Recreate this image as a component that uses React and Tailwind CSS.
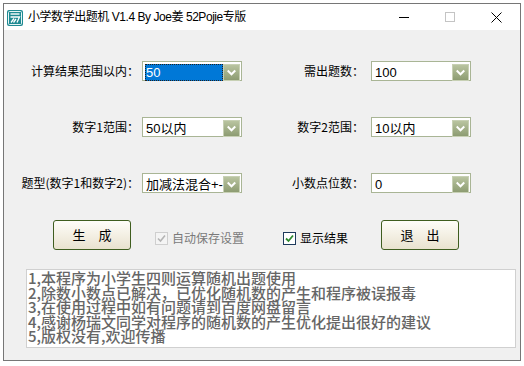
import React from "react";

function Chevron() {
  return (
    <svg width="17" height="17" viewBox="0 0 17 17">
      <path d="M5 7 L8.5 10.5 L12 7" fill="none" stroke="#ffffff" strokeWidth="2.2" strokeLinecap="square" />
    </svg>
  );
}

function Combo({ value, selected }) {
  return (
    <div className="w-[100px] h-[20px] border border-[#a9b595] bg-white flex items-start p-px box-border">
      <div
        className={
          "flex-1 h-[17px] mt-px ml-px overflow-hidden whitespace-nowrap flex items-center pl-px text-[13px] leading-none font-['Liberation_Sans','Noto_Sans_CJK_SC',sans-serif] " +
          (selected
            ? "bg-[#0078d7] text-white outline-1 outline-dotted outline-[#222] -outline-offset-1"
            : "text-black")
        }
      >
        {value}
      </div>
      <div className="w-[17px] h-[17px] mt-px border border-[#c7d0b4] bg-linear-to-b from-[#b9c4a0] to-[#8d9c72] flex items-center justify-center box-border">
        <Chevron />
      </div>
    </div>
  );
}

function Label({ children, w }) {
  return (
    <div className={"text-right text-[12px] text-black whitespace-nowrap font-['Noto_Sans_CJK_SC',sans-serif] " + w}>
      {children}
    </div>
  );
}

function Row({ l1, v1, l2, v2, sel }) {
  return (
    <div className="flex items-center h-[20px]">
      <Label w="w-[135px]">{l1}</Label>
      <div className="ml-[3px]">
        <Combo value={v1} selected={sel} />
      </div>
      <Label w="w-[122px]">{l2}</Label>
      <div className="ml-[7px]">
        <Combo value={v2} />
      </div>
    </div>
  );
}

export default function App() {
  const lines = [
    "1,本程序为小学生四则运算随机出题使用",
    "2,除数小数点已解决，已优化随机数的产生和程序被误报毒",
    "3,在使用过程中如有问题请到百度网盘留言",
    "4,感谢杨瑞文同学对程序的随机数的产生优化提出很好的建议",
    "5,版权没有,欢迎传播",
  ];
  return (
    <div className="w-[524px] h-[366px] bg-white overflow-hidden">
      <div className="ml-[3px] mt-[3px] w-[518px] h-[358px] border border-[#767676] flex flex-col box-border">
        {/* Title bar */}
        <div className="h-[26px] bg-white flex items-center relative">
          <svg width="16" height="16" viewBox="0 0 16 16" className="ml-[3px] mt-[1px]">
            <rect x="0" y="0" width="16" height="16" rx="2" fill="#1f8a92" />
            <rect x="1.5" y="1.5" width="13" height="13" rx="1" fill="none" stroke="#e6f4f4" strokeWidth="1" />
            <path d="M3.5 4 H12.5" stroke="#fff" strokeWidth="1.4" />
            <path d="M3.5 7 H12.5 L10 12.5" fill="none" stroke="#fff" strokeWidth="1.3" />
            <path d="M4 12.5 L7 8.5 M6.5 12.5 L9 9" stroke="#fff" strokeWidth="1.3" />
          </svg>
          <span className="ml-[5px] text-[12px] tracking-[-0.45px] text-black font-['Liberation_Sans','Noto_Sans_CJK_SC',sans-serif] whitespace-nowrap">
            小学数学出题机 V1.4 By Joe姜 52Pojie专版
          </span>
          <div className="ml-auto flex items-center h-full">
            <div className="w-[46px] h-full flex items-center justify-center">
              <div className="w-[10px] h-px bg-black" />
            </div>
            <div className="w-[46px] h-full flex items-center justify-center">
              <div className="w-[10px] h-[10px] border border-[#c4c4c4]" />
            </div>
            <div className="w-[46px] h-full flex items-center justify-center mr-[1px]">
              <svg width="11" height="11" viewBox="0 0 11 11">
                <path d="M0.5 0.5 L10.5 10.5 M10.5 0.5 L0.5 10.5" stroke="#000" strokeWidth="1" />
              </svg>
            </div>
          </div>
        </div>

        {/* Content */}
        <div className="flex-1 bg-[#f0f0f0] flex flex-col pt-[31px]">
          <Row l1="计算结果范围以内：" v1="50" l2="需出题数：" v2="100" sel />
          <div className="mt-[36px]">
            <Row l1="数字1范围：" v1="50以内" l2="数字2范围：" v2="10以内" />
          </div>
          <div className="mt-[36px]">
            <Row l1="题型(数字1和数字2)：" v1="加减法混合+-" l2="小数点位数：" v2="0" />
          </div>

          {/* Buttons row */}
          <div className="mt-[27px] h-[30px] flex items-center">
            <div className="ml-[49px]">
              <button className="w-[78px] h-[30px] border border-[#3f5d1f] rounded-[3px] bg-linear-to-b from-[#fefdf9] to-[#e9e2cf] text-[13px] text-black font-['Noto_Sans_CJK_SC',sans-serif] flex items-center justify-center">
                生　成
              </button>
            </div>
            <div className="ml-[24px] w-[128px] flex items-center mt-[6px]">
              <div className="w-[13px] h-[13px] border border-[#cfcfcf] bg-[#f4f4f4] flex items-center justify-center">
                <svg width="9" height="9" viewBox="0 0 9 9">
                  <path d="M1 4.5 L3.5 7 L8 1.5" fill="none" stroke="#b4b4b4" strokeWidth="1.6" />
                </svg>
              </div>
              <span className="ml-[4px] text-[12px] text-[#7a7a7a] font-['Noto_Sans_CJK_SC',sans-serif] whitespace-nowrap">
                自动保存设置
              </span>
            </div>
            <div className="w-[98px] flex items-center mt-[6px]">
              <div className="w-[13px] h-[13px] border border-[#1e3a5c] bg-white flex items-center justify-center">
                <svg width="9" height="9" viewBox="0 0 9 9">
                  <path d="M1 4.5 L3.5 7 L8 1.5" fill="none" stroke="#2f8a2f" strokeWidth="1.8" />
                </svg>
              </div>
              <span className="ml-[4px] text-[12px] text-black font-['Noto_Sans_CJK_SC',sans-serif] whitespace-nowrap">
                显示结果
              </span>
            </div>
            <button className="w-[78px] h-[30px] border border-[#3f5d1f] rounded-[3px] bg-linear-to-b from-[#fefdf9] to-[#e9e2cf] text-[13px] text-black font-['Noto_Sans_CJK_SC',sans-serif] flex items-center justify-center">
              退　出
            </button>
          </div>

          {/* Text area */}
          <div className="mt-[19px] ml-[22px] w-[490px] h-[79px] bg-white border border-[#d0d0d0] pl-[1px] pt-[1px] overflow-hidden">
            {lines.map((t, i) => (
              <div
                key={i}
                className="text-[15px] leading-[14.5px] h-[14.5px] text-[#666666] font-medium whitespace-nowrap font-['Noto_Sans_CJK_SC',sans-serif]"
              >
                {t}
              </div>
            ))}
          </div>
        </div>
      </div>
    </div>
  );
}
